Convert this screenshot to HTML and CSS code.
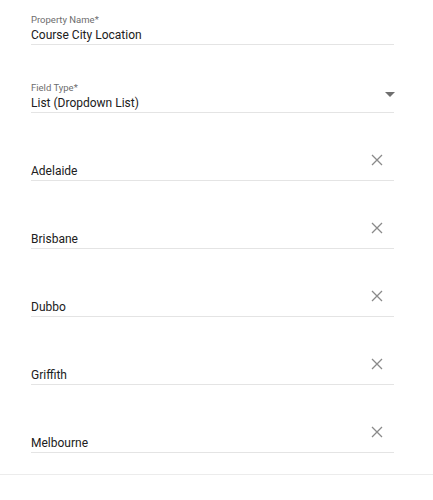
FILE: index.html
```html
<!DOCTYPE html>
<html lang="en">
<head>
    <meta charset="UTF-8">
    <meta name="viewport" content="width=device-width, initial-scale=1.0">
    <title>Property</title>
    <link rel="stylesheet" href="styles.css">
</head>
<body>
    <div class="form-panel">
        <!-- property name -->
        <div class="field field-first">
            <div class="field-label">Property Name*</div>
            <div class="field-value">Course City Location</div>
        </div>

        <!-- field type select -->
        <div class="field">
            <div class="field-label">Field Type*</div>
            <div class="field-row">
                <div class="field-value">List (Dropdown List)</div>
                <svg class="drop-arrow" width="24" height="24" viewBox="0 0 24 24"><path d="M7 10l5 5 5-5z" fill="#6f6f6f"/></svg>
            </div>
        </div>

        <!-- list options -->
        <div class="field option">
            <div class="field-row">
                <div class="field-value">Adelaide</div>
                <svg class="remove" width="14" height="14" viewBox="0 0 14 14"><path d="M2 2L12 12M12 2L2 12" stroke="#8a8a8a" stroke-width="1.3" fill="none"/></svg>
            </div>
        </div>
        <div class="field option">
            <div class="field-row">
                <div class="field-value">Brisbane</div>
                <svg class="remove" width="14" height="14" viewBox="0 0 14 14"><path d="M2 2L12 12M12 2L2 12" stroke="#8a8a8a" stroke-width="1.3" fill="none"/></svg>
            </div>
        </div>
        <div class="field option">
            <div class="field-row">
                <div class="field-value">Dubbo</div>
                <svg class="remove" width="14" height="14" viewBox="0 0 14 14"><path d="M2 2L12 12M12 2L2 12" stroke="#8a8a8a" stroke-width="1.3" fill="none"/></svg>
            </div>
        </div>
        <div class="field option">
            <div class="field-row">
                <div class="field-value">Griffith</div>
                <svg class="remove" width="14" height="14" viewBox="0 0 14 14"><path d="M2 2L12 12M12 2L2 12" stroke="#8a8a8a" stroke-width="1.3" fill="none"/></svg>
            </div>
        </div>
        <div class="field option">
            <div class="field-row">
                <div class="field-value">Melbourne</div>
                <svg class="remove" width="14" height="14" viewBox="0 0 14 14"><path d="M2 2L12 12M12 2L2 12" stroke="#8a8a8a" stroke-width="1.3" fill="none"/></svg>
            </div>
        </div>
    </div>
    <div class="panel-footer"></div>
</body>
</html>
```

FILE: styles.css
```css
body {
    margin: 0;
    font-family: Roboto, "Liberation Sans", Arial, sans-serif;
    background-color: #ffffff;
    color: #1f1f1f;
}

.form-panel {
    padding: 0 39px 0 31px;
    display: flex;
    flex-direction: column;
}

/* each input: label on top, value sits on the underline */
.field {
    height: 67px;
    display: flex;
    flex-direction: column;
    justify-content: flex-end;
    border-bottom: 1px solid #e4e4e4;
    padding-bottom: 2px;
    box-sizing: border-box;
    margin-top: 1px;
}

.field-first {
    height: 45px;
    margin-top: 0;
}

.field-label {
    font-size: 9.5px;
    line-height: 11px;
    color: #6d6d6d;
    margin-bottom: 3px;
}

.field-value {
    font-size: 12px;
    line-height: 14px;
    color: #202020;
}

.field-row {
    display: flex;
    justify-content: space-between;
    align-items: flex-end;
}

/* icons hang over the row, they must not make it taller */
.drop-arrow {
    margin: -10px -8px 0 0;
    position: relative;
    top: -4px;
}

.remove {
    margin-right: 10px;
    position: relative;
    top: -11px;
}

.panel-footer {
    margin-top: 21px;
    border-top: 1px solid #ececec;
}
```
